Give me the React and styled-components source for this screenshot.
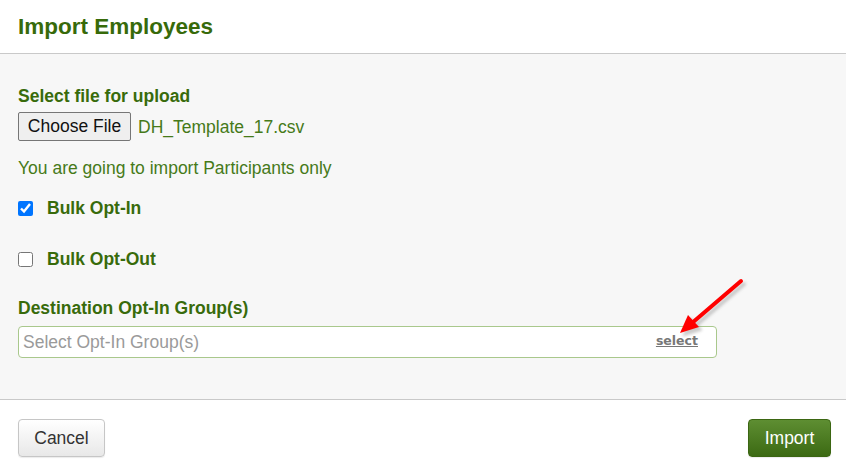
import React from "react";
import styled, { createGlobalStyle } from "styled-components";

const Global = createGlobalStyle`
  html, body { margin: 0; padding: 0; background: #fff; }
  body { font-family: "Liberation Sans", Arial, sans-serif; }
  * { box-sizing: border-box; }
`;

const Dialog = styled.div`
  width: 846px;
  height: 473px;
  display: flex;
  flex-direction: column;
  background: #fff;
`;

const Header = styled.div`
  height: 54px;
  border-bottom: 1px solid #c9c9c9;
  display: flex;
  align-items: center;
  padding: 0 18px 0;
`;

const Title = styled.h1`
  margin: 0;
  font-size: 22.5px;
  font-weight: bold;
  color: #376a0a;
`;

const Body = styled.div`
  position: relative;
  background: #f7f7f7;
  padding: 32px 18px 0;
  height: 346px;
  border-bottom: 1px solid #c9c9c9;
  display: flex;
  flex-direction: column;
`;

const Label = styled.div`
  font-size: 17.5px;
  line-height: 20px;
  font-weight: bold;
  color: #386b0b;
  margin-top: ${(p) => p.$mt || 0}px;
`;

const FileRow = styled.div`
  display: flex;
  align-items: center;
  gap: 7px;
  margin-top: 6px;
`;

const FileButton = styled.button`
  height: 29px;
  width: 113px;
  font-family: "Liberation Sans", Arial, sans-serif;
  font-size: 17.5px;
  color: #111;
  background: #efefef;
  border: 1px solid #767676;
  border-radius: 2px;
  padding: 0;
`;

const Text = styled.div`
  font-size: 17.5px;
  line-height: 20px;
  color: #467a19;
  margin-top: ${(p) => p.$mt || 0}px;
`;

const CheckRow = styled.label`
  display: flex;
  align-items: center;
  gap: 14px;
  height: 20px;
  margin-top: ${(p) => p.$mt || 0}px;
  font-size: 17.5px;
  font-weight: bold;
  color: #386b0b;
`;

const Check = styled.input`
  width: 15px;
  height: 15px;
  margin: 0;
  accent-color: #0075ff;
`;

const SelectBox = styled.div`
  margin-top: 8px;
  width: 699px;
  height: 32px;
  background: #fff;
  border: 1px solid #a9c88c;
  border-radius: 4px;
  display: flex;
  align-items: center;
  justify-content: space-between;
  padding: 0 18px 0 4px;
`;

const Placeholder = styled.span`
  font-size: 17.5px;
  color: #9a9a9a;
`;

const SelectLink = styled.a`
  font-family: "DejaVu Sans", Verdana, sans-serif;
  font-size: 12.5px;
  font-weight: bold;
  color: #777;
  text-decoration: underline;
  margin-top: -3px;
`;

const Arrow = styled.svg`
  position: absolute;
  left: 670px;
  top: 216px;
  overflow: visible;
`;

const Footer = styled.div`
  flex: 1;
  display: flex;
  justify-content: space-between;
  align-items: flex-start;
  padding: 19px 15px 0 18px;
`;

const Button = styled.button`
  height: 38px;
  padding: 0;
  width: ${(p) => p.$w}px;
  font-family: "Liberation Sans", Arial, sans-serif;
  font-size: 17.5px;
  border-radius: 4px;
  color: ${(p) => (p.$primary ? "#fff" : "#333")};
  border: 1px solid ${(p) => (p.$primary ? "#3b6612" : "#c6c6c6")};
  background: ${(p) =>
    p.$primary
      ? "linear-gradient(#5e8e32, #3c6a13)"
      : "linear-gradient(#ffffff, #e8e8e8)"};
  box-shadow: 0 1px 1px rgba(0,0,0,0.08);
`;

export default function App() {
  return (
    <>
      <Global />
      <Dialog>
        <Header>
          <Title>Import Employees</Title>
        </Header>
        <Body>
          <Label>Select file for upload</Label>
          <FileRow>
            <FileButton>Choose File</FileButton>
            <Text>DH_Template_17.csv</Text>
          </FileRow>
          <Text $mt={17}>You are going to import Participants only</Text>
          <CheckRow $mt={20}>
            <Check type="checkbox" defaultChecked />
            Bulk Opt-In
          </CheckRow>
          <CheckRow $mt={31}>
            <Check type="checkbox" />
            Bulk Opt-Out
          </CheckRow>
          <Label $mt={29}>Destination Opt-In Group(s)</Label>
          <SelectBox>
            <Placeholder>Select Opt-In Group(s)</Placeholder>
            <SelectLink href="#">select</SelectLink>
          </SelectBox>
          <Arrow width="80" height="70" viewBox="0 0 80 70">
            <defs>
              <filter id="sh" x="-30%" y="-30%" width="160%" height="160%">
                <feGaussianBlur stdDeviation="1.5" />
              </filter>
            </defs>
            <g transform="translate(3,3)" fill="#999" stroke="#999" opacity="0.5" filter="url(#sh)">
              <line x1="71" y1="11" x2="22" y2="53" strokeWidth="4" strokeLinecap="round" />
              <polygon points="10,63 29,57 18,45" />
            </g>
            <line x1="71" y1="11" x2="22" y2="53" stroke="#ff0000" strokeWidth="4" strokeLinecap="round" />
            <polygon points="10,63 29,57 18,45" fill="#ff0000" />
          </Arrow>
        </Body>
        <Footer>
          <Button $w={87}>Cancel</Button>
          <Button $w={83} $primary>Import</Button>
        </Footer>
      </Dialog>
    </>
  );
}
